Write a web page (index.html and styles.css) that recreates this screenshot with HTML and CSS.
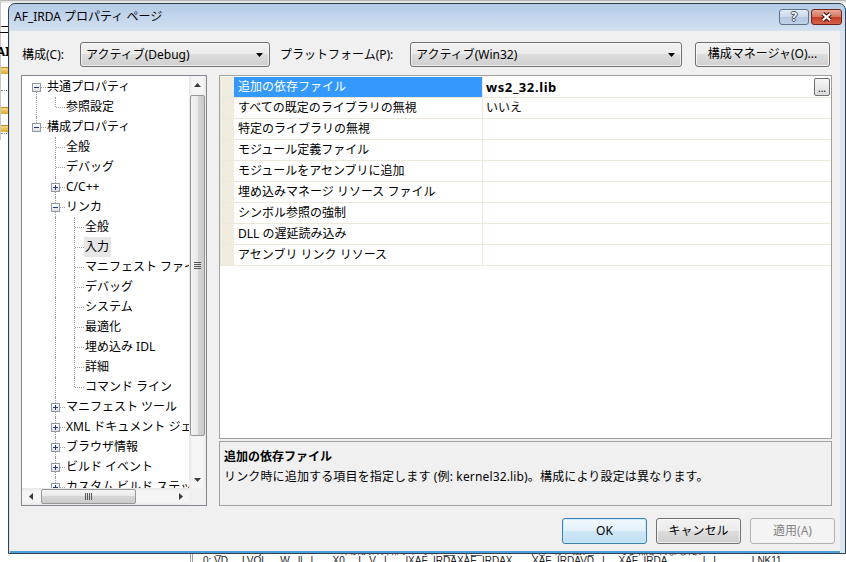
FILE: index.html
```html
<!DOCTYPE html>
<html lang="ja">
<head>
    <meta charset="UTF-8">
    <title>AF_IRDA プロパティ ページ</title>
    <link rel="stylesheet" href="styles.css">
</head>
<body>
<div class="desk">
    <!-- bits of the window behind the dialog -->
    <div class="bg-top"></div>
    <div class="bg-side">
        <span class="frag t1">ニ</span>
        <span class="frag t2">AI</span>
        <span class="frag fold f1"></span>
        <span class="frag dots d1"></span>
        <span class="frag fold f2"></span>
        <span class="frag fold f3"></span>
        <span class="frag dots d2"></span>
    </div>
    <div class="bg-bottom">
        <div class="vline"></div>
        <div class="bg-text">
            <div>AF_IRDA.obj : error LNK2019: 未解決の外部シンボル __imp__WSAStartup@8 が関数 _main で参照されました。</div>
            <div>0: VD . . LVOL . . W . ll . l . . . X0 . . l . V . l . . . lXAF_IRDAXAF_IRDAX . . . XAF_IRDAVD . l . . XAF_IRDA . . . . . . l . l . . . . . . LNK11</div>
        </div>
    </div>

    <div class="dlg">
        <div class="titlebar">
            <span class="title">AF_IRDA プロパティ ページ</span>
            <div class="caps">
                <span class="cap help">?</span>
                <span class="cap close">
                    <svg width="31" height="16" viewBox="0 0 31 16">
                        <path d="M11.5 4.5 L19.5 11.5 M19.5 4.5 L11.5 11.5" stroke="#4a1208" stroke-width="4.6" fill="none"/>
                        <path d="M11.5 4.5 L19.5 11.5 M19.5 4.5 L11.5 11.5" stroke="#fff" stroke-width="2.4" fill="none"/>
                    </svg>
                </span>
            </div>
        </div>

        <div class="client">
            <div class="toprow">
                <span class="lbl1">構成(C):</span>
                <div class="combo c1">
                    <span>アクティブ(Debug)</span>
                    <svg class="arr" width="7" height="4" viewBox="0 0 7 4"><polygon points="0,0 7,0 3.5,4" fill="#000"/></svg>
                </div>
                <span class="lbl2">プラットフォーム(P):</span>
                <div class="combo c2">
                    <span>アクティブ(Win32)</span>
                    <svg class="arr" width="7" height="4" viewBox="0 0 7 4"><polygon points="0,0 7,0 3.5,4" fill="#000"/></svg>
                </div>
                <div class="btn cfgbtn">構成マネージャ(O)...</div>
            </div>

            <div class="main">
                <div class="tree">
                    <div class="tv">
                        <div class="row"><span class="c bd"><i class="box minus"></i></span><span class="lab">共通プロパティ</span></div>
                        <div class="row"><span class="c v"></span><span class="c e"></span><span class="lab">参照設定</span></div>
                        <div class="row"><span class="c bu"><i class="box minus"></i></span><span class="lab">構成プロパティ</span></div>
                        <div class="row"><span class="c"></span><span class="c t"></span><span class="lab">全般</span></div>
                        <div class="row"><span class="c"></span><span class="c t"></span><span class="lab">デバッグ</span></div>
                        <div class="row"><span class="c"></span><span class="c t"><i class="box plus"></i></span><span class="lab">C/C++</span></div>
                        <div class="row"><span class="c"></span><span class="c t"><i class="box minus"></i></span><span class="lab">リンカ</span></div>
                        <div class="row"><span class="c"></span><span class="c v"></span><span class="c t"></span><span class="lab">全般</span></div>
                        <div class="row"><span class="c"></span><span class="c v"></span><span class="c t"></span><span class="lab sel">入力</span></div>
                        <div class="row"><span class="c"></span><span class="c v"></span><span class="c t"></span><span class="lab">マニフェスト ファイル</span></div>
                        <div class="row"><span class="c"></span><span class="c v"></span><span class="c t"></span><span class="lab">デバッグ</span></div>
                        <div class="row"><span class="c"></span><span class="c v"></span><span class="c t"></span><span class="lab">システム</span></div>
                        <div class="row"><span class="c"></span><span class="c v"></span><span class="c t"></span><span class="lab">最適化</span></div>
                        <div class="row"><span class="c"></span><span class="c v"></span><span class="c t"></span><span class="lab">埋め込み IDL</span></div>
                        <div class="row"><span class="c"></span><span class="c v"></span><span class="c t"></span><span class="lab">詳細</span></div>
                        <div class="row"><span class="c"></span><span class="c v"></span><span class="c e"></span><span class="lab">コマンド ライン</span></div>
                        <div class="row"><span class="c"></span><span class="c t"><i class="box plus"></i></span><span class="lab">マニフェスト ツール</span></div>
                        <div class="row"><span class="c"></span><span class="c t"><i class="box plus"></i></span><span class="lab">XML ドキュメント ジェネレータ</span></div>
                        <div class="row"><span class="c"></span><span class="c t"><i class="box plus"></i></span><span class="lab">ブラウザ情報</span></div>
                        <div class="row"><span class="c"></span><span class="c t"><i class="box plus"></i></span><span class="lab">ビルド イベント</span></div>
                        <div class="row"><span class="c"></span><span class="c t"><i class="box plus"></i></span><span class="lab">カスタム ビルド ステップ</span></div>
                    </div>
                    <div class="vs">
                        <div class="sarr">
                            <svg width="7" height="4" viewBox="0 0 7 4"><polygon points="0,4 7,4 3.5,0" fill="#3c3c3c"/></svg>
                        </div>
                        <div class="vthumb">
                            <svg width="8" height="7" viewBox="0 0 8 7">
                                <path d="M0 0.5H7M0 2.5H7M0 4.5H7M0 6.5H7" stroke="#555" stroke-width="1"/>
                            </svg>
                        </div>
                        <div class="sp"></div>
                        <div class="sarr">
                            <svg width="7" height="4" viewBox="0 0 7 4"><polygon points="0,0 7,0 3.5,4" fill="#3c3c3c"/></svg>
                        </div>
                    </div>
                    <div class="hs">
                        <div class="sarr">
                            <svg width="4" height="7" viewBox="0 0 4 7"><polygon points="4,0 4,7 0,3.5" fill="#3c3c3c"/></svg>
                        </div>
                        <div class="hthumb">
                            <svg width="7" height="8" viewBox="0 0 7 8">
                                <path d="M0.5 0V7M2.5 0V7M4.5 0V7M6.5 0V7" stroke="#555" stroke-width="1"/>
                            </svg>
                        </div>
                        <div class="sp"></div>
                        <div class="sarr">
                            <svg width="4" height="7" viewBox="0 0 4 7"><polygon points="0,0 0,7 4,3.5" fill="#3c3c3c"/></svg>
                        </div>
                    </div>
                    <div class="corner"></div>
                </div>

                <div class="right">
                    <div class="pg">
                        <div class="prow sel"><span class="gut"></span><span class="nm">追加の依存ファイル</span><span class="val"><b>ws2_32.lib</b><span class="more">...</span></span></div>
                        <div class="prow"><span class="gut"></span><span class="nm">すべての既定のライブラリの無視</span><span class="val">いいえ</span></div>
                        <div class="prow"><span class="gut"></span><span class="nm">特定のライブラリの無視</span><span class="val"></span></div>
                        <div class="prow"><span class="gut"></span><span class="nm">モジュール定義ファイル</span><span class="val"></span></div>
                        <div class="prow"><span class="gut"></span><span class="nm">モジュールをアセンブリに追加</span><span class="val"></span></div>
                        <div class="prow"><span class="gut"></span><span class="nm">埋め込みマネージ リソース ファイル</span><span class="val"></span></div>
                        <div class="prow"><span class="gut"></span><span class="nm">シンボル参照の強制</span><span class="val"></span></div>
                        <div class="prow"><span class="gut"></span><span class="nm">DLL の遅延読み込み</span><span class="val"></span></div>
                        <div class="prow"><span class="gut"></span><span class="nm">アセンブリ リンク リソース</span><span class="val"></span></div>
                    </div>
                    <div class="desc">
                        <div class="dtitle">追加の依存ファイル</div>
                        <div class="dtext">リンク時に追加する項目を指定します (例: kernel32.lib)。構成により設定は異なります。</div>
                    </div>
                </div>
            </div>

            <div class="btns">
                <div class="btn dflt">OK</div>
                <div class="btn">キャンセル</div>
                <div class="btn off">適用(A)</div>
            </div>
        </div>
    </div>
</div>
</body>
</html>
```

FILE: styles.css
```css
* {
    box-sizing: border-box;
}
body {
    margin: 0;
    font-family: "Noto Sans", "Noto Sans CJK JP", sans-serif;
    font-size: 12px;
    color: #000;
}
.desk {
    position: relative;
    width: 846px;
    height: 562px;
    overflow: hidden;
    background: #fff;
}

/* background window scraps */
.bg-top {
    height: 3px;
    background: #e6e6e6;
    border-top: 1px solid #b4b4b4;
}
.bg-side {
    position: absolute;
    left: 0;
    top: 0;
    width: 8px;
    height: 140px;
    border-left: 1px solid #c8c8c8;
}
.frag {
    position: absolute;
    left: 0;
    display: block;
    line-height: 12px;
    white-space: nowrap;
}
.t1 { top: 24px; left: -2px; }
.t2 { top: 45px; left: -5px; font-weight: bold; font-size: 13px; }
.fold {
    width: 8px;
    height: 7px;
    background: linear-gradient(#f7dc7c, #dcaa2e);
    border-top: 1px solid #b98d1e;
}
.f1 { top: 67px; }
.f2 { top: 107px; }
.f3 { top: 125px; }
.dots {
    width: 8px;
    border-top: 1px dotted #888;
}
.d1 { top: 90px; }
.d2 { top: 133px; }
.bg-bottom {
    position: absolute;
    left: 0;
    top: 552px;
    width: 846px;
    height: 10px;
}
.vline {
    position: absolute;
    left: 190px;
    top: 0;
    width: 3px;
    height: 10px;
    border-left: 1px solid #a0a0a0;
    border-right: 1px solid #a0a0a0;
}
.bg-text {
    position: absolute;
    left: 203px;
    top: -6px;
    font-family: "Liberation Sans", sans-serif;
    font-size: 10px;
    line-height: 10px;
    white-space: nowrap;
    color: #222;
}

/* dialog frame */
.dlg {
    position: absolute;
    left: 8px;
    top: 3px;
    width: 838px;
    border: 1px solid #33414f;
    border-radius: 7px 7px 0 0;
    background: linear-gradient(#b3cbe6, #cbdbee 20px, #d8e4f2 30px);
    padding: 0 5px 0 1px;
}
.titlebar {
    height: 27px;
    display: flex;
    align-items: flex-start;
}
.title {
    padding-left: 4px;
    line-height: 26px;
}
.caps {
    margin-left: auto;
    margin-right: -2px;
    margin-top: 5px;
    display: flex;
    gap: 2px;
}
.cap {
    width: 30px;
    height: 16px;
    border: 1px solid #5f7189;
    border-radius: 3px;
    display: flex;
    align-items: center;
    justify-content: center;
}
.help {
    background: linear-gradient(#e3ecf6, #c9d8ea 50%, #b3c7de 50%, #bfd2e8);
    color: #fff;
    font-weight: bold;
    font-size: 12px;
    line-height: 14px;
    text-shadow: 1px 0 #3e4c5e, -1px 0 #3e4c5e, 0 1px #3e4c5e, 0 -1px #3e4c5e;
}
.close {
    width: 31px;
    border-color: #6e2418;
    background: linear-gradient(#e9a99a, #d57460 50%, #c43a22 50%, #d4644b);
}

/* client area */
.client {
    width: 830px;
    height: 522px;
    background: #f0f0f0;
    border-bottom: 2px solid #4a9fd8;
    display: flex;
    flex-direction: column;
}
.toprow {
    display: flex;
    align-items: center;
    height: 25px;
    margin-top: 11px;
    padding-left: 12px;
    line-height: 16px;
}
.lbl1 { width: 58px; }
.lbl2 { width: 130px; margin-left: 10px; }
.combo {
    height: 25px;
    display: flex;
    align-items: center;
    padding: 0 6px 0 5px;
    border: 1px solid #707070;
    border-radius: 3px;
    background: linear-gradient(#f2f2f2, #ebebeb 50%, #dddddd 50%, #cfcfcf);
    box-shadow: inset 0 0 0 1px rgba(255, 255, 255, 0.6);
}
.combo .arr { margin-left: auto; }
.c1 { width: 190px; }
.c2 { width: 272px; }
.btn {
    height: 26px;
    width: 85px;
    border: 1px solid #707070;
    border-radius: 3px;
    background: linear-gradient(#f2f2f2, #ebebeb 50%, #dddddd 50%, #cfcfcf);
    box-shadow: inset 0 0 0 1px rgba(255, 255, 255, 0.7);
    text-align: center;
    line-height: 23px;
}
.cfgbtn {
    width: 135px;
    height: 25px;
    margin-left: 13px;
    line-height: 22px;
}

.main {
    display: flex;
    gap: 12px;
    height: 431px;
    margin-top: 8px;
    padding-left: 11px;
}

/* tree */
.tree {
    width: 186px;
    border: 1px solid #828790;
    background: #fff;
    display: grid;
    grid-template-columns: 167px 17px;
    grid-template-rows: 412px 17px;
}
.tv {
    overflow: hidden;
    padding-top: 1px;
}
.row {
    display: flex;
    height: 20px;
    padding-left: 5px;
    line-height: 20px;
    white-space: nowrap;
}
.c {
    position: relative;
    flex: none;
    width: 19px;
    height: 20px;
}
.c::before,
.c::after {
    content: "";
    position: absolute;
}
.c.v::before,
.c.t::before {
    left: 9px;
    top: 0;
    bottom: 0;
    border-left: 1px dotted #a0a0a0;
}
.c.e::before,
.c.bu::before {
    left: 9px;
    top: 0;
    height: 10px;
    border-left: 1px dotted #a0a0a0;
}
.c.bd::before {
    left: 9px;
    top: 10px;
    bottom: 0;
    border-left: 1px dotted #a0a0a0;
}
.c.t::after,
.c.e::after,
.c.bd::after,
.c.bu::after {
    left: 10px;
    right: 0;
    top: 10px;
    border-top: 1px dotted #a0a0a0;
}
.box {
    position: absolute;
    z-index: 1;
    left: 5px;
    top: 6px;
    width: 9px;
    height: 9px;
    border: 1px solid #8f9aa6;
    background: linear-gradient(#fff, #dedede);
}
.box::before,
.box.plus::after {
    content: "";
    position: absolute;
    background: #1e3a78;
}
.box::before {
    left: 1px;
    top: 3px;
    width: 5px;
    height: 1px;
}
.box.plus::after {
    left: 3px;
    top: 1px;
    width: 1px;
    height: 5px;
}
.lab {
    padding: 0 2px 0 1px;
}
.lab.sel {
    background: #e6e6e6;
}

.vs,
.hs {
    display: flex;
    background: linear-gradient(90deg, #e6e6e6, #f5f5f5 20%, #f5f5f5 80%, #e9e9e9);
}
.vs {
    flex-direction: column;
}
.hs {
    background: linear-gradient(#e6e6e6, #f5f5f5 20%, #f5f5f5 80%, #e9e9e9);
}
.sarr {
    flex: none;
    width: 17px;
    height: 17px;
    display: flex;
    align-items: center;
    justify-content: center;
}
.sp {
    flex: 1;
}
.vthumb,
.hthumb {
    flex: none;
    display: flex;
    align-items: center;
    justify-content: center;
    border: 1px solid #979797;
    border-radius: 2px;
}
.vthumb {
    height: 341px;
    margin: 2px 1px 0;
    background: linear-gradient(90deg, #f4f4f4, #e8e8e8 50%, #d6d6d6 50%, #cbcbcb);
}
.hthumb {
    width: 95px;
    margin: 1px 0 1px 2px;
    background: linear-gradient(#f4f4f4, #e8e8e8 50%, #d6d6d6 50%, #cbcbcb);
}
.corner {
    background: #f0f0f0;
}

/* property grid */
.right {
    width: 613px;
    display: flex;
    flex-direction: column;
}
.pg {
    height: 364px;
    border: 1px solid #a0a0a0;
    background: #fff;
    padding-top: 1px;
}
.prow {
    display: grid;
    grid-template-columns: 14px 249px 1fr;
    height: 21px;
    border-bottom: 1px solid #ece9db;
    line-height: 20px;
    white-space: nowrap;
}
.gut {
    background: #efecdf;
}
.nm {
    padding-left: 4px;
    border-right: 1px solid #ece9db;
}
.prow.sel .nm {
    background: #3399ff;
    color: #fff;
}
.val {
    display: flex;
    align-items: center;
    padding-left: 3px;
}
.val b {
    font-size: 13px;
    letter-spacing: 0.6px;
}
.more {
    margin-left: auto;
    margin-right: 1px;
    width: 16px;
    height: 18px;
    border: 1px solid #707070;
    border-radius: 2px;
    background: linear-gradient(#f6f6f6, #dcdcdc);
    font-size: 10px;
    line-height: 18px;
    text-align: center;
}
.desc {
    flex: 1;
    margin-top: 2px;
    border: 1px solid #a0a0a0;
    padding: 5px 4px;
    line-height: 20px;
}
.dtitle {
    font-weight: bold;
}
.dtext {
    letter-spacing: 0.15px;
}

/* bottom buttons */
.btns {
    display: flex;
    justify-content: flex-end;
    gap: 9px;
    margin-top: 12px;
    padding-right: 5px;
}
.btn.dflt {
    border-color: #3c7fb1;
    background: linear-gradient(#f1f8fd, #e3f1fb 50%, #cfe7f7 50%, #c1dff3);
    box-shadow: inset 0 0 0 1px #c9ecfc;
}
.btn.off {
    border-color: #adb2b5;
    background: #f4f4f4;
    box-shadow: none;
    color: #838383;
}
```
